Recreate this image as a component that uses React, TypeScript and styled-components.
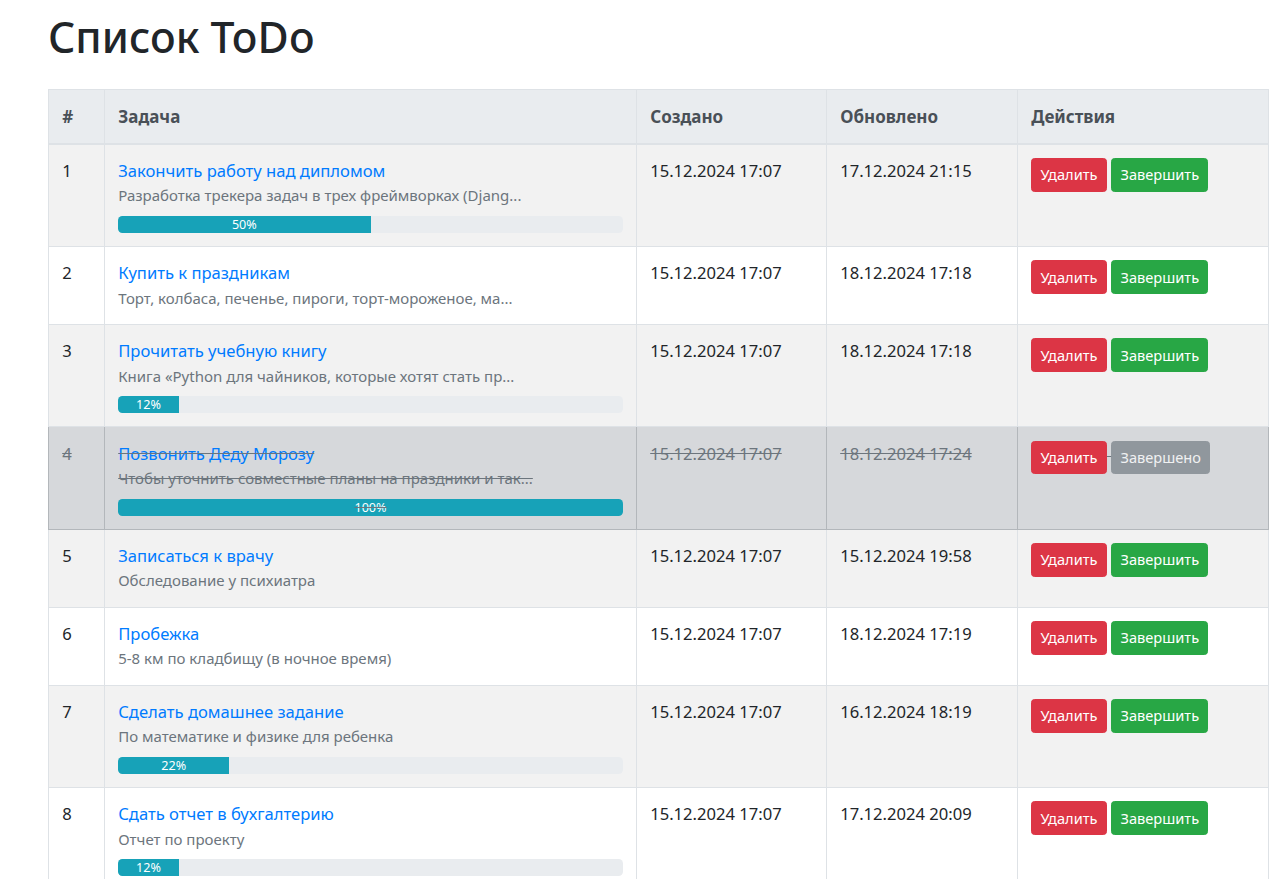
import React from 'react';
import styled, { createGlobalStyle } from 'styled-components';

const GlobalStyle = createGlobalStyle`
  html, body { margin: 0; padding: 0; background: #fff; }
  body {
    font-family: "Noto Sans", "Open Sans", "DejaVu Sans", sans-serif;
    font-size: 16.6px;
    line-height: 26.4px;
    color: #212529;
  }
`;

const Page = styled.div`
  padding: 11px 7px 0 48px;
`;

const Heading = styled.h1`
  margin: 0 0 25px;
  font-size: 42.7px;
  font-weight: 500;
  line-height: 52.8px;
  color: #212529;
`;

const Table = styled.table`
  width: 1220px;
  border-collapse: collapse;
  table-layout: fixed;
`;

const Th = styled.th<{ $w: number }>`
  box-sizing: border-box;
  width: ${(p) => p.$w}px;
  padding: 14px 13.2px 12.4px;
  text-align: left;
  vertical-align: bottom;
  font-size: 17px;
  font-weight: 700;
  color: #495057;
  background: #e9ecef;
  border: 1px solid #dee2e6;
  border-bottom-width: 2px;
`;

type Variant = 'odd' | 'even' | 'done';

const Row = styled.tr<{ $variant: Variant }>`
  background: ${(p) =>
    p.$variant === 'done' ? '#d6d8db' : p.$variant === 'odd' ? '#f2f2f2' : '#fff'};
  color: ${(p) => (p.$variant === 'done' ? '#6c757d' : '#212529')};
  text-decoration: ${(p) => (p.$variant === 'done' ? 'line-through' : 'none')};
`;

const Td = styled.td<{ $done?: boolean }>`
  padding: 13.2px;
  vertical-align: top;
  border: 1px solid ${(p) => (p.$done ? '#b3b7bb' : '#dee2e6')};
`;

const TaskLink = styled.a`
  display: block;
  color: #007bff;
  text-decoration: none;
  line-height: 26.4px;
`;

const Desc = styled.div`
  font-size: 15px;
  line-height: 23.1px;
  color: #6c757d;
  margin-bottom: 1px;
`;

const Progress = styled.div`
  display: flex;
  height: 17px;
  margin-top: 8.6px;
  background: #e9ecef;
  border-radius: 4.4px;
  overflow: hidden;
`;

const ProgressBar = styled.div`
  display: flex;
  align-items: center;
  justify-content: center;
  background: #17a2b8;
  color: #fff;
  font-size: 12.6px;
  line-height: 17px;
  white-space: nowrap;
`;

const Button = styled.button<{ $kind: 'danger' | 'success' | 'secondary'; disabled?: boolean }>`
  display: inline-block;
  padding: 4.4px 8.4px;
  font-family: inherit;
  font-size: 14.6px;
  line-height: 23.1px;
  color: #fff;
  border-radius: 3.5px;
  border: 1px solid
    ${(p) => (p.$kind === 'danger' ? '#dc3545' : p.$kind === 'success' ? '#28a745' : '#6c757d')};
  background: ${(p) =>
    p.$kind === 'danger' ? '#dc3545' : p.$kind === 'success' ? '#28a745' : '#6c757d'};
  opacity: ${(p) => (p.disabled ? 0.65 : 1)};
  vertical-align: middle;
  cursor: pointer;
`;

type Task = {
  title: string;
  desc: string;
  progress?: number;
  created: string;
  updated: string;
  done?: boolean;
};

const tasks: Task[] = [
  {
    title: 'Закончить работу над дипломом',
    desc: 'Разработка трекера задач в трех фреймворках (Djang...',
    progress: 50,
    created: '15.12.2024 17:07',
    updated: '17.12.2024 21:15',
  },
  {
    title: 'Купить к праздникам',
    desc: 'Торт, колбаса, печенье, пироги, торт-мороженое, ма...',
    created: '15.12.2024 17:07',
    updated: '18.12.2024 17:18',
  },
  {
    title: 'Прочитать учебную книгу',
    desc: 'Книга «Python для чайников, которые хотят стать пр...',
    progress: 12,
    created: '15.12.2024 17:07',
    updated: '18.12.2024 17:18',
  },
  {
    title: 'Позвонить Деду Морозу',
    desc: 'Чтобы уточнить совместные планы на праздники и так...',
    progress: 100,
    created: '15.12.2024 17:07',
    updated: '18.12.2024 17:24',
    done: true,
  },
  {
    title: 'Записаться к врачу',
    desc: 'Обследование у психиатра',
    created: '15.12.2024 17:07',
    updated: '15.12.2024 19:58',
  },
  {
    title: 'Пробежка',
    desc: '5-8 км по кладбищу (в ночное время)',
    created: '15.12.2024 17:07',
    updated: '18.12.2024 17:19',
  },
  {
    title: 'Сделать домашнее задание',
    desc: 'По математике и физике для ребенка',
    progress: 22,
    created: '15.12.2024 17:07',
    updated: '16.12.2024 18:19',
  },
  {
    title: 'Сдать отчет в бухгалтерию',
    desc: 'Отчет по проекту',
    progress: 12,
    created: '15.12.2024 17:07',
    updated: '17.12.2024 20:09',
  },
];

export default function App() {
  return (
    <>
      <GlobalStyle />
      <Page>
        <Heading>Список ToDo</Heading>
        <Table>
          <thead>
            <tr>
              <Th $w={56}>#</Th>
              <Th $w={532}>Задача</Th>
              <Th $w={190}>Создано</Th>
              <Th $w={191}>Обновлено</Th>
              <Th $w={251}>Действия</Th>
            </tr>
          </thead>
          <tbody>
            {tasks.map((t, i) => {
              const variant: Variant = t.done ? 'done' : i % 2 === 0 ? 'odd' : 'even';
              return (
                <Row key={i} $variant={variant}>
                  <Td $done={t.done}>{i + 1}</Td>
                  <Td $done={t.done}>
                    <TaskLink href="#">{t.title}</TaskLink>
                    <Desc>{t.desc}</Desc>
                    {t.progress !== undefined && (
                      <Progress>
                        <ProgressBar style={{ width: `${t.progress}%` }}>{t.progress}%</ProgressBar>
                      </Progress>
                    )}
                  </Td>
                  <Td $done={t.done}>{t.created}</Td>
                  <Td $done={t.done}>{t.updated}</Td>
                  <Td $done={t.done}>
                    <Button $kind="danger">Удалить</Button>{' '}
                    {t.done ? (
                      <Button $kind="secondary" disabled>
                        Завершено
                      </Button>
                    ) : (
                      <Button $kind="success">Завершить</Button>
                    )}
                  </Td>
                </Row>
              );
            })}
          </tbody>
        </Table>
      </Page>
    </>
  );
}
